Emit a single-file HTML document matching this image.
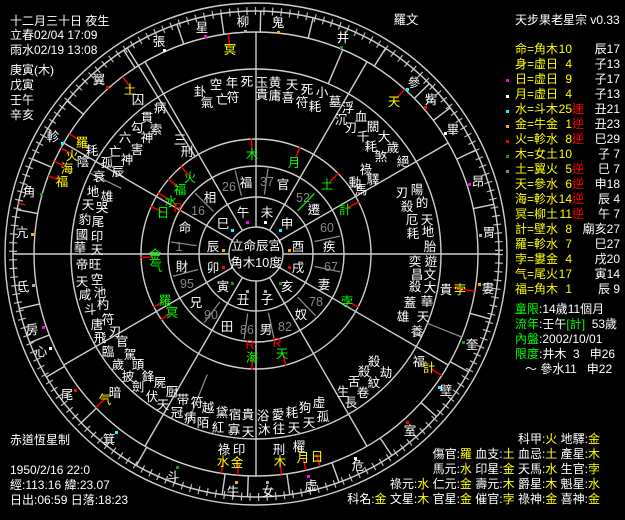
<!DOCTYPE html>
<html><head><meta charset="utf-8">
<style>
html,body{margin:0;padding:0;background:#000;}
body{width:625px;height:520px;position:relative;overflow:hidden;font-family:"Liberation Sans","Noto Sans CJK TC","WenQuanYi Zen Hei",sans-serif;font-size:12px;color:#fff;}
.a{position:absolute;white-space:pre;line-height:15px;}
.y{color:#ff0}.g{color:#0f0}.r{color:#f00}
.n{display:inline-block;width:14px;text-align:right}
svg text{font-size:12.5px;text-anchor:middle;dominant-baseline:central;font-family:"Liberation Sans","Noto Sans CJK TC","WenQuanYi Zen Hei",sans-serif;}
</style></head><body>
<svg width="625" height="520" style="position:absolute;left:0;top:0">
<g transform="translate(256,254)" fill="none" stroke="#cfcfcf" stroke-width="1.4">
<circle r="251"/><circle r="243" stroke="#bbb" stroke-width="8" stroke-dasharray="1.2 7.4" fill="none"/>
<circle r="243"/><circle r="222"/><circle r="185"/><circle r="115"/><circle r="88"/><circle r="57"/><circle r="27"/>
<g>
<line x1="27" x2="222"/><line x1="27" x2="222" transform="rotate(30)"/><line x1="27" x2="222" transform="rotate(60)"/><line x1="27" x2="222" transform="rotate(90)"/><line x1="27" x2="222" transform="rotate(120)"/><line x1="27" x2="222" transform="rotate(150)"/><line x1="27" x2="222" transform="rotate(180)"/><line x1="27" x2="222" transform="rotate(210)"/><line x1="27" x2="222" transform="rotate(240)"/><line x1="27" x2="222" transform="rotate(270)"/><line x1="27" x2="222" transform="rotate(300)"/><line x1="27" x2="222" transform="rotate(330)"/>
</g>
<g>
<line x1="222" x2="243" transform="rotate(-98.3)"/><line x1="222" x2="243" transform="rotate(-88.9)"/><line x1="222" x2="243" transform="rotate(-76.4)"/><line x1="222" x2="243" transform="rotate(-57.8)"/><line x1="222" x2="243" transform="rotate(-44.5)"/><line x1="222" x2="243" transform="rotate(-37)"/><line x1="222" x2="243" transform="rotate(-25.3)"/><line x1="222" x2="243" transform="rotate(-11.8)"/><line x1="222" x2="243" transform="rotate(0)"/><line x1="222" x2="243" transform="rotate(15.5)"/><line x1="222" x2="243" transform="rotate(29)"/><line x1="222" x2="243" transform="rotate(42)"/><line x1="222" x2="243" transform="rotate(56)"/><line x1="222" x2="243" transform="rotate(70)"/><line x1="222" x2="243" transform="rotate(82)"/><line x1="222" x2="243" transform="rotate(92)"/><line x1="222" x2="243" transform="rotate(98)"/><line x1="222" x2="243" transform="rotate(119.5)"/><line x1="222" x2="243" transform="rotate(136)"/><line x1="222" x2="243" transform="rotate(149.6)"/><line x1="222" x2="243" transform="rotate(158.6)"/><line x1="222" x2="243" transform="rotate(167)"/><line x1="222" x2="243" transform="rotate(180)"/><line x1="222" x2="243" transform="rotate(190.5)"/><line x1="222" x2="243" transform="rotate(203)"/><line x1="222" x2="243" transform="rotate(219)"/><line x1="222" x2="243" transform="rotate(237)"/><line x1="222" x2="243" transform="rotate(251)"/>
<line x1="115" x2="243" transform="rotate(-122)"/><line x1="185" x2="222" transform="rotate(-67)"/>
</g>
<g stroke="#888" stroke-width="1.3">
<line x1="60" x2="86" transform="rotate(-104)"/><line x1="60" x2="86" transform="rotate(-82)"/><line x1="60" x2="86" transform="rotate(-135)"/><line x1="60" x2="86" transform="rotate(-12)"/><line x1="60" x2="86" transform="rotate(12)"/><line x1="60" x2="86" transform="rotate(46)"/><line x1="60" x2="86" transform="rotate(78)"/><line x1="60" x2="86" transform="rotate(98)"/><line x1="60" x2="86" transform="rotate(127)"/><line x1="60" x2="86" transform="rotate(165)"/><line x1="60" x2="86" transform="rotate(-172)"/>
<line x1="185" x2="222" transform="rotate(22)"/><line x1="130" x2="185" transform="rotate(112)"/><line x1="150" x2="185" transform="rotate(-154)"/>
</g>
<line x1="60" x2="84" transform="rotate(-46)" stroke="#0d0" stroke-width="1.5"/>
<g stroke="#e00" stroke-width="1.5">
<line x1="209" x2="222" transform="rotate(-97.2)"/><line x1="209" x2="222" transform="rotate(-127)"/><line x1="209" x2="222" transform="rotate(-147.2)"/><line x1="209" x2="222" transform="rotate(-151.5)"/><line x1="209" x2="222" transform="rotate(-155.3)"/><line x1="209" x2="222" transform="rotate(-159.4)"/><line x1="209" x2="222" transform="rotate(-47.9)"/><line x1="200" x2="222" transform="rotate(9.7)"/><line x1="209" x2="222" transform="rotate(33.2)"/><line x1="209" x2="222" transform="rotate(136.2)"/><line x1="209" x2="222" transform="rotate(99)"/><line x1="209" x2="222" transform="rotate(94.8)"/><line x1="209" x2="222" transform="rotate(83.4)"/><line x1="209" x2="222" transform="rotate(77)"/><line x1="209" x2="222" transform="rotate(73.2)"/><line x1="236" x2="243" transform="rotate(-168)"/>
<line x1="103" x2="116" transform="rotate(-92.3)"/><line x1="103" x2="116" transform="rotate(-67.6)"/><line x1="103" x2="116" transform="rotate(-44.4)"/><line x1="103" x2="116" transform="rotate(-26.8)"/><line x1="103" x2="116" transform="rotate(27.3)"/><line x1="103" x2="116" transform="rotate(75)"/><line x1="103" x2="116" transform="rotate(92)"/><line x1="103" x2="116" transform="rotate(145.4)"/><line x1="103" x2="116" transform="rotate(152.7)"/><line x1="103" x2="116" transform="rotate(178.3)"/><line x1="103" x2="116" transform="rotate(-155.7)"/><line x1="103" x2="116" transform="rotate(-148)"/><line x1="103" x2="116" transform="rotate(-139.5)"/><line x1="103" x2="116" transform="rotate(-130.6)"/>
</g>
</g>
<g fill="#fff">
<text x="202" y="28">星</text><text x="243" y="22">柳</text><text x="278" y="23">鬼</text><text x="343" y="38">井</text><text x="414" y="83">參</text><text x="431" y="100">觜</text><text x="453" y="130">畢</text><text x="478" y="182">昂</text><text x="489" y="233">胃</text><text x="488" y="289">婁</text><text x="472" y="345">奎</text><text x="446" y="391">壁</text><text x="410" y="431">室</text><text x="358" y="466">危</text><text x="311" y="486">虚</text><text x="268" y="492">女</text><text x="233" y="492">牛</text><text x="173" y="477">斗</text><text x="109" y="440">箕</text><text x="67" y="395">尾</text><text x="41" y="352">心</text><text x="32" y="330">房</text><text x="23" y="287">氐</text><text x="22" y="233">亢</text><text x="29" y="192">角</text><text x="53" y="137">軫</text><text x="99" y="80">翼</text><text x="159" y="42">張</text>
<text x="406" y="20">羅文</text>
</g>
<g>
<rect x="204" y="35" width="3" height="3" fill="#f0f"/><rect x="244" y="30" width="3" height="3" fill="#aaa"/><rect x="277" y="31" width="3" height="3" fill="#fa0"/><rect x="340" y="46" width="3" height="3" fill="#0a0"/><rect x="406" y="88" width="3" height="3" fill="#0ff"/><rect x="424" y="106" width="3" height="3" fill="#f00"/><rect x="444" y="132" width="3" height="3" fill="#fff"/><rect x="468" y="183" width="3" height="3" fill="#f0f"/><rect x="479" y="234" width="3" height="3" fill="#aaa"/><rect x="478" y="283" width="3" height="3" fill="#fa0"/><rect x="462" y="341" width="3" height="3" fill="#0a0"/><rect x="438" y="386" width="3" height="3" fill="#0ff"/><rect x="406" y="421" width="3" height="3" fill="#f00"/><rect x="354" y="457" width="3" height="3" fill="#fff"/><rect x="307" y="475" width="3" height="3" fill="#f0f"/><rect x="266" y="481" width="3" height="3" fill="#aaa"/><rect x="235" y="481" width="3" height="3" fill="#fa0"/><rect x="176" y="466" width="3" height="3" fill="#0a0"/><rect x="115" y="431" width="3" height="3" fill="#0ff"/><rect x="74" y="389" width="3" height="3" fill="#f00"/><rect x="49" y="347" width="3" height="3" fill="#fff"/><rect x="42" y="326" width="3" height="3" fill="#f0f"/><rect x="32" y="284" width="3" height="3" fill="#aaa"/><rect x="31" y="233" width="3" height="3" fill="#fa0"/><rect x="40" y="193" width="3" height="3" fill="#0a0"/><rect x="61" y="142" width="3" height="3" fill="#0ff"/><rect x="106" y="86" width="3" height="3" fill="#f00"/><rect x="163" y="49" width="3" height="3" fill="#fff"/>
</g>
<g fill="#fff">
<text x="256" y="246">立命辰宮</text><text x="256" y="263">角木10度</text>
<text x="243" y="213">午</text><text x="267" y="213">未</text><text x="287" y="224">申</text><text x="298" y="247">酉</text><text x="298" y="268">戌</text><text x="287" y="287">亥</text><text x="267" y="300">子</text><text x="243" y="300">丑</text><text x="223" y="287">寅</text><text x="213" y="268">卯</text><text x="213" y="247">辰</text><text x="223" y="224">巳</text>
<text x="246" y="183">福</text><text x="283" y="185">官</text><text x="314" y="210">遷</text><text x="329" y="247">疾</text><text x="324" y="285">妻</text><text x="301" y="315">奴</text><text x="266" y="330">男</text><text x="227" y="327">田</text><text x="196" y="303">兄</text><text x="182" y="267">財</text><text x="185" y="228">命</text><text x="210" y="198">相</text>
</g>
<g><rect x="246" y="221" width="3" height="3" fill="#f0f"/><rect x="264" y="221" width="3" height="3" fill="#fff"/><rect x="279" y="229" width="3" height="3" fill="#0ff"/><rect x="288" y="249" width="3" height="3" fill="#fa0"/><rect x="288" y="266" width="3" height="3" fill="#f00"/><rect x="279" y="282" width="3" height="3" fill="#0a0"/><rect x="264" y="290" width="3" height="3" fill="#aaa"/><rect x="246" y="290" width="3" height="3" fill="#aaa"/><rect x="231" y="282" width="3" height="3" fill="#0a0"/><rect x="222" y="266" width="3" height="3" fill="#f00"/><rect x="222" y="249" width="3" height="3" fill="#fa0"/><rect x="231" y="229" width="3" height="3" fill="#0ff"/></g>
<g fill="#888">
<text x="229" y="187">26</text><text x="267" y="182">37</text><text x="303" y="198">52</text><text x="327" y="228">60</text><text x="331" y="267">67</text><text x="316" y="302">78</text><text x="285" y="327">82</text><text x="247" y="330">86</text><text x="211" y="315">90</text><text x="187" y="284">95</text><text x="179" y="247">1</text><text x="198" y="211">16</text>
</g>
<g fill="#0f0">
<text x="252" y="155">木</text><text x="294" y="163">月</text><text x="327" y="185">土</text><text x="345" y="210">計</text><text x="347" y="302">孛</text><text x="282" y="354">天</text><text x="252" y="358">海</text><text x="172" y="313">冥</text><text x="165" y="301">羅</text><text x="155" y="255">金</text><text x="156" y="267">气</text><text x="163" y="213">日</text><text x="171" y="202">水</text><text x="180" y="190">福</text><text x="190" y="178">火</text>
</g>
<g fill="#f00"><text x="178" y="208">R</text><text x="250" y="345">R</text><text x="277" y="343">R</text></g>
<g fill="#ff0">
<text x="230" y="50">冥</text><text x="130" y="90">土</text><text x="82" y="143">羅</text><text x="72" y="156">火</text><text x="67" y="169">海</text><text x="62" y="182">福</text><text x="394" y="102">天</text><text x="460" y="290">孛</text><text x="429" y="368">計</text><text x="105" y="400">气</text><text x="223" y="462">水</text><text x="237" y="463">金</text><text x="280" y="462">木</text><text x="303" y="458">月</text><text x="317" y="457">日</text>
</g>
<g fill="#fff">
<text x="200" y="92">卦</text><text x="216" y="85">空</text><text x="232" y="83">年</text><text x="247" y="82">死</text><text x="262" y="83">玉</text><text x="275" y="83">黄</text><text x="292" y="85">天</text><text x="307" y="90">死</text><text x="322" y="93">小</text><text x="335" y="102">墓</text>
<text x="207" y="103">氣</text><text x="222" y="100">亡</text><text x="233" y="98">符</text><text x="262" y="95">貴</text><text x="275" y="96">庸</text><text x="288" y="98">喜</text><text x="302" y="103">符</text><text x="315" y="107">耗</text>
<text x="348" y="108">浮</text><text x="341" y="120">沉</text><text x="361" y="117">血</text><text x="351" y="128">刃</text><text x="373" y="127">關</text><text x="363" y="137">千</text><text x="384" y="137">大</text><text x="393" y="148">歲</text><text x="371" y="147">耗</text><text x="381" y="157">煞</text><text x="403" y="162">絕</text><text x="366" y="170">祿</text><text x="373" y="180">驛</text><text x="355" y="183">動</text><text x="361" y="190">馬</text>
<text x="417" y="190">陽</text><text x="402" y="193">刃</text><text x="422" y="203">的</text><text x="407" y="207">殺</text><text x="427" y="220">天</text><text x="412" y="220">厄</text><text x="428" y="232">地</text><text x="413" y="234">耗</text><text x="430" y="247">胎</text><text x="431" y="262">遊</text><text x="415" y="262">奕</text><text x="430" y="275">文</text><text x="417" y="275">昌</text><text x="430" y="288">大</text><text x="415" y="287">殺</text><text x="427" y="302">華</text><text x="410" y="303">蓋</text><text x="423" y="317">天</text><text x="403" y="317">雄</text><text x="417" y="332">養</text>
<text x="446" y="290">貴</text><text x="419" y="362">福</text>
<text x="374" y="362">殺</text><text x="386" y="373">劫</text><text x="364" y="372">殺</text><text x="354" y="382">舌</text><text x="374" y="383">紋</text><text x="343" y="392">生</text><text x="363" y="393">卷</text><text x="351" y="403">長</text>
<text x="319" y="403">虚</text><text x="305" y="408">狗</text><text x="323" y="417">孤</text><text x="292" y="413">耗</text><text x="309" y="423">天</text><text x="278" y="415">愛</text><text x="263" y="416">浴</text><text x="264" y="430">沐</text><text x="279" y="429">往</text><text x="294" y="428">天</text>
<text x="279" y="450">刑</text><text x="299" y="447">櫂</text><text x="224" y="450">祿</text><text x="239" y="450">印</text>
<text x="82" y="265">帝</text><text x="95" y="265">旺</text><text x="82" y="282">天</text><text x="97" y="280">空</text><text x="85" y="295">咸</text><text x="100" y="293">池</text><text x="90" y="310">斗</text><text x="103" y="305">杓</text><text x="108" y="320">符</text><text x="97" y="325">唐</text><text x="115" y="332">刃</text><text x="100" y="338">飛</text><text x="122" y="342">官</text><text x="108" y="352">臨</text><text x="130" y="355">駕</text><text x="118" y="365">歲</text><text x="138" y="365">頭</text><text x="128" y="377">披</text><text x="148" y="377">鋒</text><text x="138" y="387">劍</text><text x="160" y="383">屍</text><text x="152" y="397">伏</text><text x="172" y="392">厨</text><text x="163" y="405">天</text><text x="183" y="400">带</text><text x="177" y="413">冠</text><text x="197" y="403">符</text><text x="190" y="418">病</text><text x="208" y="408">越</text><text x="203" y="423">陌</text><text x="222" y="413">黛</text><text x="218" y="428">紅</text><text x="235" y="415">宿</text><text x="234" y="430">寡</text><text x="248" y="415">貴</text><text x="248" y="432">天</text>
<text x="115" y="393">暗</text>
<text x="138" y="100">囚</text><text x="160" y="108">病</text><text x="147" y="118">貫</text><text x="137" y="128">勾</text><text x="156" y="130">索</text><text x="125" y="138">六</text><text x="147" y="138">神</text><text x="137" y="150">害</text><text x="115" y="152">亡</text><text x="127" y="160">神</text><text x="107" y="163">孤</text><text x="118" y="172">辰</text><text x="92" y="151">耗</text><text x="83" y="162">陰</text>
<text x="99" y="177">衰</text><text x="93" y="192">地</text><text x="107" y="197">雄</text><text x="88" y="205">天</text><text x="102" y="208">哭</text><text x="85" y="220">豹</text><text x="98" y="222">尾</text><text x="82" y="235">國</text><text x="97" y="237">印</text><text x="80" y="248">華</text><text x="97" y="250">天</text>
<text x="180" y="140">三</text><text x="187" y="152">刑</text>
</g>
</svg>

<div class="a" style="left:10px;top:14px">十二月三十日 夜生</div>
<div class="a" style="left:10px;top:28px">立春02/04 17:09</div>
<div class="a" style="left:10px;top:43px">雨水02/19 13:08</div>
<div class="a" style="left:10px;top:63px">庚寅(木)</div>
<div class="a" style="left:10px;top:78px">戊寅</div>
<div class="a" style="left:10px;top:93px">壬午</div>
<div class="a" style="left:10px;top:108px">辛亥</div>

<div class="a" style="left:10px;top:433px">赤道恆星制</div>
<div class="a" style="left:10px;top:463px">1950/2/16 22:0</div>
<div class="a" style="left:10px;top:478px">經:113.16 緯:23.07</div>
<div class="a" style="left:10px;top:493px">日出:06:59 日落:18:23</div>

<div class="a" style="left:515px;top:13px">天步果老星宗 v0.33</div>
<div class="a y" style="left:515px;top:42px;line-height:15px">命=角木<span class="n">10</span>
身=虚日<span class="n">4</span>
日=虚日<span class="n">9</span>
月=虚日<span class="n">4</span>
水=斗木<span class="n">25</span><span class="r">速</span>
金=牛金<span class="n">1</span><span class="r">逆</span>
火=軫水<span class="n">8</span><span class="r">逆</span>
木=女土<span class="n">10</span>
土=翼火<span class="n">5</span><span class="r">逆</span>
天=參水<span class="n">6</span><span class="r">逆</span>
海=軫水<span class="n">14</span><span class="r">逆</span>
冥=柳土<span class="n">11</span><span class="r">逆</span>
計=壁水<span class="n">8</span>
羅=軫水<span class="n">7</span>
孛=婁金<span class="n">4</span>
气=尾火<span class="n">17</span>
福=角木<span class="n">1</span></div>
<div class="a" style="left:575px;top:42px;width:45px;text-align:right;line-height:15px">辰17
子13
子17
子13
丑21
丑23
巳29
子 7
巳 7
申18
辰 4
午 7
廟亥27
巳27
戌20
寅14
辰 9</div>
<div style="position:absolute;left:506px;top:79px;width:3px;height:3px;background:#f0f"></div>
<div style="position:absolute;left:506px;top:95px;width:3px;height:3px;background:#fff"></div>
<div style="position:absolute;left:506px;top:110px;width:3px;height:3px;background:#0ff"></div>
<div style="position:absolute;left:506px;top:125px;width:3px;height:3px;background:#fa0"></div>
<div style="position:absolute;left:506px;top:140px;width:3px;height:3px;background:#f00"></div>
<div style="position:absolute;left:506px;top:155px;width:3px;height:3px;background:#0a0"></div>
<div style="position:absolute;left:506px;top:170px;width:3px;height:3px;background:#888"></div>

<div class="a" style="left:515px;top:302px"><span class="g">童限</span>:14歲11個月</div>
<div class="a" style="left:515px;top:317px"><span class="g">流年</span>:壬午<span class="g">[計]</span>  53歲</div>
<div class="a" style="left:515px;top:332px"><span class="g">內盤</span>:2002/10/01</div>
<div class="a" style="left:515px;top:347px"><span class="g">限度</span>:井木  3   申26</div>
<div class="a" style="left:525px;top:362px">～ 參水11   申22</div>

<div class="a" style="right:25px;top:432px;text-align:right">科甲:<span class="y">火</span> 地驛:<span class="y">金</span></div>
<div class="a" style="right:25px;top:447px;text-align:right">傷官:<span class="y">羅</span> 血支:<span class="y">土</span> 血忌:<span class="y">土</span> 產星:<span class="y">木</span></div>
<div class="a" style="right:25px;top:462px;text-align:right">馬元:<span class="y">水</span> 印星:<span class="y">金</span> 天馬:<span class="y">水</span> 生官:<span class="y">孛</span></div>
<div class="a" style="right:25px;top:477px;text-align:right">祿元:<span class="y">水</span> 仁元:<span class="y">金</span> 壽元:<span class="y">木</span> 爵星:<span class="y">木</span> 魁星:<span class="y">水</span></div>
<div class="a" style="right:25px;top:492px;text-align:right">科名:<span class="y">金</span> 文星:<span class="y">木</span> 官星:<span class="y">金</span> 催官:<span class="y">孛</span> 祿神:<span class="y">金</span> 喜神:<span class="y">金</span></div>
</body></html>
